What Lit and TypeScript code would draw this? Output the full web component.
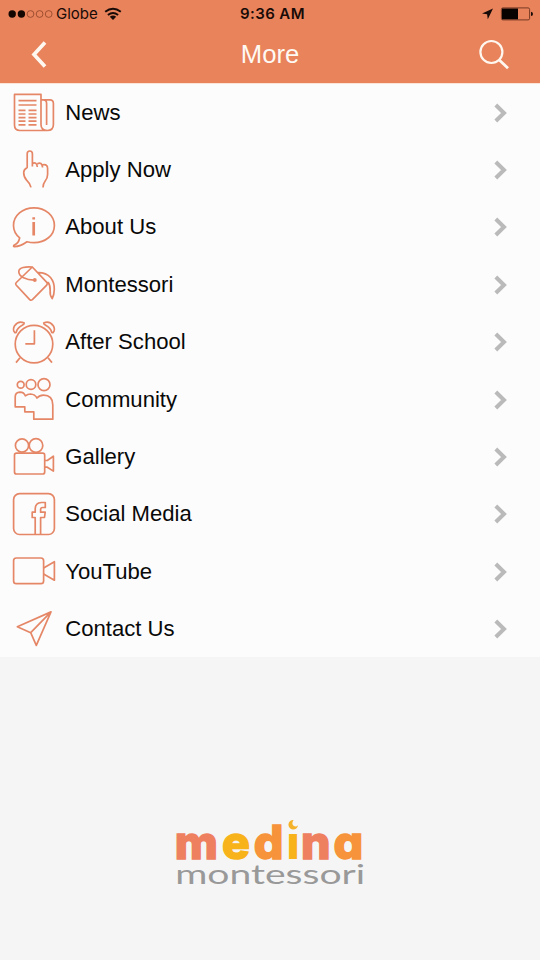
import { LitElement, html, css, svg } from "lit";
import { customElement, property } from "lit/decorators.js";

const icons: Record<string, unknown> = {
  news: svg`<path d="M14.5 10.4H41V40.5Q41 46.5 47.3 46.5H20Q14.5 46.5 14.5 41Z M41 15.8H50Q53.4 15.8 53.4 19.5V40.5Q53.4 46.5 47.3 46.5 M46.6 41V19.5Q46.6 15.8 43.5 15.8"/>
    <path d="M18.5 16.6H36.5M18.5 21H36.5M18.5 26.4H25.5M28.5 26.4H36.5M18.5 30H25.5M28.5 30H36.5M18.5 33.6H25.5M28.5 33.6H36.5M18.5 37.2H25.5M28.5 37.2H36.5M18.5 40.8H25.5M28.5 40.8H36.5"/>`,
  hand: svg`<path d="M31 46.5Q30.5 43 26.6 39.2Q23.7 36 23.7 31.5Q23.7 28.5 27.2 26.5V12.7Q27.2 10 29.8 10Q32.4 10 32.4 12.7V25.5 M32.4 22.5Q36.8 20.5 37.3 26 M37.3 22.7Q42 20.5 42.6 26.5 M42.6 23.8Q47.6 22.8 47.6 27.5V33.5Q47.6 37 45.2 40Q42.9 43 43 46.5"/>`,
  info: svg`<path d="M19.7 38.8C15.8 35.6 13.5 31 13.5 26.4C13.5 16.5 22.6 8.8 34 8.8S54.4 16.5 54.4 26.4S45.3 43.7 34 43.7Q30.5 43.7 27 42.8Q20 47.8 14.2 47.6C13 47.4 13.7 46.2 14.8 45.8Q18.5 44.5 19.7 38.8Z"/><path stroke-width="2.7" d="M33.7 23V36.5M33.7 18.2V20.5"/>`,
  bucket: svg`<path d="M32.3 11L46.8 26.4Q47.9 27.8 46.7 29.2L32.4 43.7Q31 44.8 29.7 43.6L16.1 29Q15.1 27.8 16.3 26.5Z M34.8 24.1C26.5 24.3 18.4 20.6 18.8 15.4C19.1 11.6 25.5 10.4 32.3 11 M37.7 16.6C49.5 16.2 54.5 24.5 54.3 33.5Q54.2 38.7 52.2 42.6Q49.6 39.2 50.2 35Q50.4 29.5 48.3 26.5L47.2 26.8"/><circle cx="34.8" cy="24" r="1.1" fill="#e7835f"/>`,
  clock: svg`<circle cx="34" cy="30.1" r="18.8"/><path d="M34.4 16.2V29.8H25.3 M20 43.7L16 48.6M48 43.7L52 48.6 M14.7 18.5Q12.2 15.8 14.6 11.8Q18.6 6.2 24.2 9Q24.2 10.3 22.2 11.3Q17.4 13.8 16.3 18Q15.6 19.2 14.7 18.5Z M53.2 18.5Q55.7 15.8 53.3 11.8Q49.3 6.2 43.7 9Q43.7 10.3 45.7 11.3Q50.5 13.8 51.6 18Q52.3 19.2 53.2 18.5Z"/>`,
  people: svg`<circle cx="20.7" cy="13.8" r="3.4"/><circle cx="31" cy="13.5" r="4.8"/><circle cx="44" cy="13.7" r="6"/><path d="M15.2 35.8V26Q15.2 21.3 20 21.2Q24 21.3 25.3 24.8Q27.6 23 30.5 23Q35 23.3 37 27Q39.6 24.2 43.5 24.2Q52.8 24.2 52.8 34V48.2H33.8V40.8H24.8V35.8Z"/>`,
  film: svg`<circle cx="22" cy="17.5" r="6.6"/><circle cx="36" cy="17.5" r="6.8"/><rect x="14.5" y="25.2" width="30.2" height="20.8" rx="2"/><path d="M44.7 32.5H47.3L53.4 28.2V43.1L47.3 39.2H44.7"/>`,
  social: svg`<rect x="13.6" y="7.7" width="40.8" height="40.8" rx="6"/><path d="M35.2 48.3V31.5H32.2V26.2H35.2V23Q35.2 16.7 41.5 16.5H45.3V21.5H42.7Q40.6 21.5 40.6 23.8V26.2H45.2L44.5 31.5H40.6V48.3"/>`,
  video: svg`<rect x="13.6" y="15" width="30" height="25.7" rx="2.7"/><path d="M43.6 25L54.4 18.7V37.2L43.6 30.9"/>`,
  plane: svg`<path d="M51 10.9L17.3 25.7L30.7 31.7L36.3 44.4ZM51 10.9L30.7 31.7"/>`,
};

@customElement("menu-row")
export class MenuRow extends LitElement {
  @property() label = "";
  @property() icon = "";

  static styles = css`
    :host {
      display: flex;
      align-items: center;
      height: 57.4px;
    }
    .icon {
      flex: none;
      width: 65.3px;
      height: 57.4px;
      fill: none;
      stroke: #e58767;
      stroke-width: 1.7;
      stroke-linejoin: round;
    }
    .label {
      flex: 1;
      font-size: 22.1px;
      line-height: 28px;
      color: #090909;
      white-space: nowrap;
    }
    .chevron {
      flex: none;
      width: 20px;
      height: 24px;
      margin-right: 29px;
      fill: none;
      stroke: #bababa;
      stroke-width: 4;
    }
  `;

  render() {
    return html`
      <svg class="icon" viewBox="0 0 65.3 57.4">${icons[this.icon]}</svg>
      <span class="label">${this.label}</span>
      <svg class="chevron" viewBox="0 0 20 24"><path d="M4.8 4L13 12L4.8 20" /></svg>
    `;
  }
}

@customElement("app-root")
export class AppRoot extends LitElement {
  static styles = css`
    :host {
      display: flex;
      flex-direction: column;
      width: 540px;
      height: 960px;
      overflow: hidden;
      background: #f5f5f5;
      font-family: "Liberation Sans", Arial, sans-serif;
    }
    .top {
      flex: none;
      height: 83px;
      background: #e8835c;
      border-bottom: 1px solid #fbe5d9;
      box-sizing: content-box;
    }
    .status {
      display: grid;
      grid-template-columns: 1fr auto 1fr;
      align-items: center;
      height: 27px;
      font-family: Inter, sans-serif;
      font-size: 15px;
      color: #180b07;
    }
    .carrier {
      display: flex;
      align-items: center;
      padding-left: 8px;
    }
    .dots {
      width: 48px;
      height: 12px;
    }
    .wifi {
      width: 18px;
      height: 14px;
      margin-left: 6px;
    }
    .time {
      font-weight: 600;
      font-size: 15px;
      letter-spacing: 0.4px;
      padding-left: 5px;
    }
    .power {
      display: flex;
      justify-content: flex-end;
      padding-right: 6px;
    }
    .power svg {
      width: 54px;
      height: 16px;
    }
    .nav {
      display: grid;
      grid-template-columns: 80px 1fr 80px;
      align-items: center;
      height: 54px;
    }
    .nav svg {
      width: 80px;
      height: 54px;
      fill: none;
      stroke: #fff8f0;
    }
    .title {
      margin: 0;
      text-align: center;
      font-size: 25.7px;
      font-weight: 400;
      color: #fff9f3;
    }
    .list {
      flex: none;
      height: 573.4px;
      background: #fcfcfc;
    }
    .footer {
      flex: 1;
      display: flex;
      justify-content: center;
      align-items: flex-start;
      padding-top: 152.6px;
    }
    .logo {
      width: 210px;
      height: 85px;
    }
    .medina {
      font: 800 46.5px Inter, sans-serif;
      font-feature-settings: "cv11" 1;
      stroke-width: 1.5;
    }
    .coral {
      fill: #ee8060;
      stroke: #ee8060;
    }
    .gold {
      fill: #f8b31b;
      stroke: #f8b31b;
    }
    .slim {
      stroke-width: 0;
    }
    .amber {
      fill: #f7933a;
      stroke: #f7933a;
    }
    .cover {
      fill: #f5f5f5;
    }
    .moon {
      fill: #f4b12a;
    }
    .montessori {
      font: 400 27px Lato, sans-serif;
      fill: #999;
    }
  `;

  private rows = [
    ["News", "news"],
    ["Apply Now", "hand"],
    ["About Us", "info"],
    ["Montessori", "bucket"],
    ["After School", "clock"],
    ["Community", "people"],
    ["Gallery", "film"],
    ["Social Media", "social"],
    ["YouTube", "video"],
    ["Contact Us", "plane"],
  ];

  render() {
    return html`
      <header class="top">
        <div class="status">
          <div class="carrier">
            <svg class="dots" viewBox="0 0 48 12">
              <circle cx="4.2" cy="6" r="3.7" fill="#140600" />
              <circle cx="13.4" cy="6" r="3.7" fill="#140600" />
              <g fill="none" stroke="#8d4227" stroke-width=".8">
                <circle cx="22.5" cy="6" r="3.4" />
                <circle cx="31.6" cy="6" r="3.4" />
                <circle cx="40.7" cy="6" r="3.4" />
              </g>
            </svg>
            <span>Globe</span>
            <svg class="wifi" viewBox="0 0 18 14" fill="none" stroke="#180b07" stroke-width="1.9">
              <path d="M1.2 4.8Q9 -1.5 16.8 4.8M3.9 8Q9 3.8 14.1 8" />
              <path d="M5.8 9.7Q9 7.1 12.2 9.7L9 13Z" fill="#180b07" stroke="none" />
            </svg>
          </div>
          <span class="time">9:36 AM</span>
          <div class="power">
            <svg viewBox="0 0 54 16">
              <path d="M13 2.5L7.8 13.2L7.1 8.2L2 7.5Z" fill="#180b07" />
              <rect x="21.4" y="1.9" width="28.2" height="12" rx="1.5" fill="none" stroke="#6b321d" stroke-width=".9" />
              <path d="M22 2.5H38V13.3H22Z" fill="#080301" />
              <path d="M51 5.8Q53 6.2 53 7.9T51 10Z" fill="#180b07" />
            </svg>
          </div>
        </div>
        <nav class="nav">
          <svg viewBox="0 0 80 54"><path d="M45 15.5L34 27.5L45 39.5" stroke-width="3.7" /></svg>
          <h1 class="title">More</h1>
          <svg viewBox="0 0 80 54">
            <circle cx="31.4" cy="25" r="11" stroke-width="2.2" />
            <path d="M39 32.8L48 41.2" stroke-width="2.8" />
          </svg>
        </nav>
      </header>
      <main class="list">
        ${this.rows.map(([label, icon]) => html`<menu-row .label=${label} .icon=${icon}></menu-row>`)}
      </main>
      <footer class="footer">
        <svg class="logo" viewBox="0 0 210 85">
          <text class="medina" y="48.8"><tspan class="coral" x="9.8">m</tspan><tspan class="gold" x="57">e</tspan><tspan class="amber" x="88.7">d</tspan><tspan class="gold slim" x="121.5">i</tspan><tspan class="coral" x="136">n</tspan><tspan class="amber" x="168.5">a</tspan></text>
          <rect class="cover" x="121.8" y="5" width="14" height="18" />
          <path class="moon" d="M128.6 9.9A4.8 4.8 0 1 0 133 15.2Q131.2 17.3 128.8 16Q126 13.6 128.6 9.9Z" />
          <text class="montessori" x="10.2" y="74" textLength="190" lengthAdjust="spacingAndGlyphs">montessori</text>
        </svg>
      </footer>
    `;
  }
}
